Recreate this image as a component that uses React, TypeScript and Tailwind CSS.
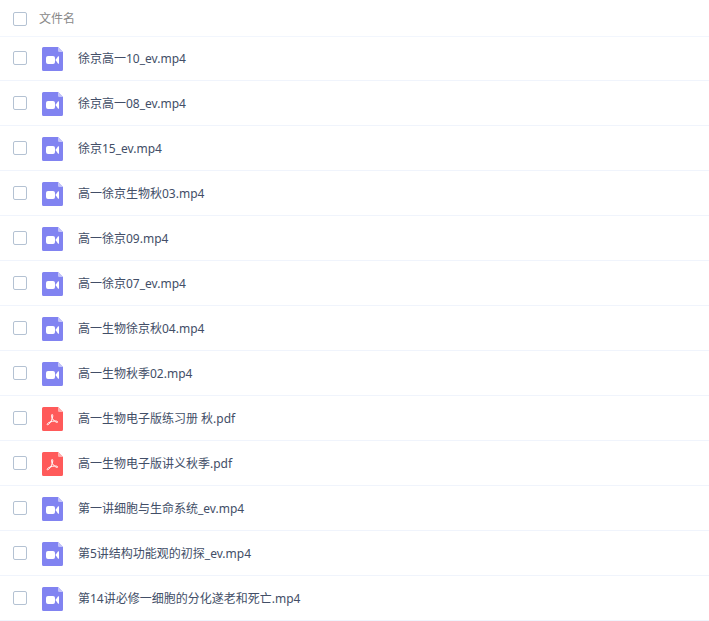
import React, { useState } from 'react';

type FileKind = 'video' | 'pdf';

interface FileItem {
  id: number;
  name: string;
  kind: FileKind;
}

const files: FileItem[] = [
  { id: 1, name: '徐京高一10_ev.mp4', kind: 'video' },
  { id: 2, name: '徐京高一08_ev.mp4', kind: 'video' },
  { id: 3, name: '徐京15_ev.mp4', kind: 'video' },
  { id: 4, name: '高一徐京生物秋03.mp4', kind: 'video' },
  { id: 5, name: '高一徐京09.mp4', kind: 'video' },
  { id: 6, name: '高一徐京07_ev.mp4', kind: 'video' },
  { id: 7, name: '高一生物徐京秋04.mp4', kind: 'video' },
  { id: 8, name: '高一生物秋季02.mp4', kind: 'video' },
  { id: 9, name: '高一生物电子版练习册 秋.pdf', kind: 'pdf' },
  { id: 10, name: '高一生物电子版讲义秋季.pdf', kind: 'pdf' },
  { id: 11, name: '第一讲细胞与生命系统_ev.mp4', kind: 'video' },
  { id: 12, name: '第5讲结构功能观的初探_ev.mp4', kind: 'video' },
  { id: 13, name: '第14讲必修一细胞的分化遂老和死亡.mp4', kind: 'video' },
];

function FileIcon({ kind }: { kind: FileKind }) {
  const isPdf = kind === 'pdf';

  return (
    <svg width="21" height="24" viewBox="0 0 21 24" aria-hidden="true" className="block shrink-0">
      <path
        d="M1.5 0H16L21 5V22.5A1.5 1.5 0 0 1 19.5 24H1.5A1.5 1.5 0 0 1 0 22.5V1.5A1.5 1.5 0 0 1 1.5 0Z"
        fill={isPdf ? '#ff5a5a' : '#8183f1'}
      />
      <path d="M16 0L21 5H17.2A1.2 1.2 0 0 1 16 3.8Z" fill={isPdf ? '#ffb0b0' : '#c3c4fa'} />
      {isPdf ? (
        <path
          d="M10.2 11.6C9.4 9.8 9.2 7.4 10.1 7.4C11.1 7.4 10.9 9.6 10.2 11.6C9.6 13.3 8.9 14.6 8 15.8C7 17.2 5.6 18.4 5.2 17.6C4.8 16.8 6.4 15.6 8.2 15C9.8 14.4 11.4 14 12.7 14C14.4 13.9 15.8 14.3 15.6 15.1C15.4 15.9 13.8 15.3 12.7 14C11.6 13.2 10.8 12.6 10.2 11.6Z"
          fill="none"
          stroke="#fff"
          strokeWidth="1"
          strokeLinejoin="round"
        />
      ) : (
        <>
          <rect x="4" y="9" width="9" height="8" rx="2" fill="#fff" />
          <path
            d="M13.6 12.6C14.8 11.8 15.2 10.6 15.9 9.6C16.4 8.9 17 9 17 9.8V16.2C17 17 16.4 17.1 15.9 16.4C15.2 15.4 14.8 14.2 13.6 13.4Z"
            fill="#fff"
          />
        </>
      )}
    </svg>
  );
}

interface CheckboxProps {
  id?: string;
  label?: string;
  checked: boolean;
  onChange: () => void;
}

function Checkbox({ id, label, checked, onChange }: CheckboxProps) {
  return (
    <input
      id={id}
      type="checkbox"
      aria-label={label}
      checked={checked}
      onChange={onChange}
      className="block size-3.5 appearance-none rounded-xs border border-[#b4c2d3] bg-white checked:bg-[#8183f1]"
    />
  );
}

export default function App() {
  const [selected, setSelected] = useState<number[]>([]);
  const allSelected = selected.length === files.length;

  const toggle = (id: number) => {
    setSelected((prev) => (prev.includes(id) ? prev.filter((x) => x !== id) : [...prev, id]));
  };

  return (
    <table className="w-full border-separate border-spacing-0 bg-white text-left font-['Noto_Sans','Noto_Sans_CJK_SC',sans-serif] text-xs text-[#424e67]">
      <thead>
        <tr className="h-[37px]">
          <th className="w-[39px] border-b border-[#f2f6fd] pt-px pl-[13px]">
            <Checkbox
              label="全选"
              checked={allSelected}
              onChange={() => setSelected(allSelected ? [] : files.map((f) => f.id))}
            />
          </th>
          <th className="border-b border-[#f2f6fd] pt-0.5 font-normal text-[#888]">文件名</th>
        </tr>
      </thead>
      <tbody>
        {files.map((file) => (
          <tr key={file.id} className="h-[45px] first:h-[44px]">
            <td className="border-b border-[#f0f4fc] pb-px pl-[13px]">
              <Checkbox
                id={`file-${file.id}`}
                checked={selected.includes(file.id)}
                onChange={() => toggle(file.id)}
              />
            </td>
            <td className="border-b border-[#f0f4fc] pt-px pl-[3px]">
              <label htmlFor={`file-${file.id}`} className="flex items-center gap-[15px]">
                <FileIcon kind={file.kind} />
                {file.name}
              </label>
            </td>
          </tr>
        ))}
      </tbody>
    </table>
  );
}
